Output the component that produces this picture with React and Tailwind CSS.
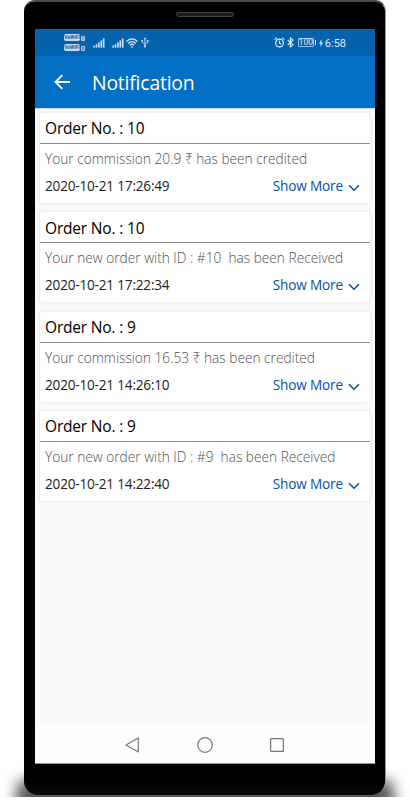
const notifications = [
  { id: 1, order: 10, message: 'Your commission 20.9 ₹ has been credited', date: '2020-10-21 17:26:49' },
  { id: 2, order: 10, message: 'Your new order with ID : #10  has been Received', date: '2020-10-21 17:22:34' },
  { id: 3, order: 9, message: 'Your commission 16.53 ₹ has been credited', date: '2020-10-21 14:26:10' },
  { id: 4, order: 9, message: 'Your new order with ID : #9  has been Received', date: '2020-10-21 14:22:40' },
];

function SignalIcon() {
  return (
    <svg width="12" height="10" viewBox="0 0 12 10" fill="#d3e3f3">
      <rect x="0.3" y="7.6" width="1.6" height="2" />
      <rect x="2.7" y="6.2" width="1.6" height="3.4" />
      <rect x="5.1" y="4.4" width="1.6" height="5.2" />
      <rect x="7.5" y="2.4" width="1.6" height="7.2" />
      <rect x="9.9" y="0.4" width="1.6" height="9.2" />
    </svg>
  );
}

function WifiIcon() {
  return (
    <svg width="12" height="10" viewBox="0 0 12 10" fill="none" stroke="#d3e3f3" strokeWidth="1.4">
      <path d="M0.5 3.4C3.6 0.2 8.4 0.2 11.5 3.4" />
      <path d="M2.2 5.4C4.4 3.2 7.6 3.2 9.8 5.4" />
      <path d="M3.9 7.2C5.1 6 6.9 6 8.1 7.2" />
      <circle cx="6" cy="8.8" r="0.9" fill="#d3e3f3" stroke="none" />
    </svg>
  );
}

function UsbIcon() {
  return (
    <svg width="8" height="11" viewBox="0 0 8 11" fill="none" stroke="#c3d9ee" strokeWidth="1">
      <path d="M4 1V9.5M1.2 3.6V5.4L4 7.2L6.8 5.4V3.6" />
      <path d="M2.6 2.2L4 0.2L5.4 2.2Z" fill="#c3d9ee" stroke="none" />
      <circle cx="4" cy="9.4" r="1.1" fill="#c3d9ee" stroke="none" />
      <rect x="0.4" y="3" width="1.6" height="1.6" fill="#c3d9ee" stroke="none" />
      <rect x="6" y="3" width="1.6" height="1.6" fill="#c3d9ee" stroke="none" />
    </svg>
  );
}

function AlarmIcon() {
  return (
    <svg width="11" height="11" viewBox="0 0 11 11" fill="none" stroke="#dce9f5" strokeWidth="1.2">
      <circle cx="5.5" cy="6" r="3.9" />
      <path d="M5.5 3.8V6.2L7.2 7.2M0.6 2.6L2.8 0.8M10.4 2.6L8.2 0.8" />
    </svg>
  );
}

function BluetoothIcon() {
  return (
    <svg width="7" height="11" viewBox="0 0 7 11" fill="none" stroke="#dce9f5" strokeWidth="1.1">
      <path d="M0.7 3L6 7.8L3.4 10V1L6 3.2L0.7 8" />
    </svg>
  );
}

function VolteBadge({ sim }) {
  return (
    <div className="flex items-end gap-[1px]">
      <span className="flex h-[7px] w-[16px] items-center justify-center rounded-[2px] bg-[#c9dcef] text-[5px] leading-none font-bold text-[#0562ad]">
        VoWiFi
      </span>
      <span className="flex h-[5px] w-[4px] items-center justify-center rounded-[1px] bg-[#a9c8e4] text-[4px] leading-none font-bold text-[#0562ad]">
        {sim}
      </span>
    </div>
  );
}

function StatusBar() {
  return (
    <div className="flex h-[27px] items-center bg-[#0562ad] pr-[29px] pl-[29px] font-[Roboto,sans-serif]">
      <div className="flex flex-col gap-[3px]">
        <VolteBadge sim="1" />
        <VolteBadge sim="2" />
      </div>
      <div className="ml-[8px] flex items-center">
        <SignalIcon />
        <div className="ml-[7px]">
          <SignalIcon />
        </div>
        <div className="ml-[2px]">
          <WifiIcon />
        </div>
        <div className="ml-[3px]">
          <UsbIcon />
        </div>
      </div>
      <div className="ml-auto flex items-center text-[#e3edf7]">
        <AlarmIcon />
        <div className="ml-[2px]">
          <BluetoothIcon />
        </div>
        <span className="ml-[4px] flex h-[9px] w-[16px] items-center justify-center rounded-[1px] border border-[#9dc0e0] text-[8.5px] leading-none">
          100
        </span>
        <span className="ml-px h-[5px] w-px bg-[#dce9f5]" />
        <svg className="ml-[3px]" width="4" height="8" viewBox="0 0 4 8" fill="#e3edf7">
          <path d="M2.6 0L0 4.5H1.7L1.3 8L4 3.4H2.3Z" />
        </svg>
        <span className="mt-px ml-[2px] text-[11px] leading-none">6:58</span>
      </div>
    </div>
  );
}

function NotificationCard({ order, message, date }) {
  return (
    <div className="h-[90px] rounded-[3px] bg-white shadow-[0_0_3px_1px_rgba(0,0,0,0.07)]">
      <div className="flex h-[31px] items-center border-b border-[#8c8c8c] pt-[2px] pl-[5px] text-[15.5px] tracking-[-0.18px] text-black">
        Order No. : {order}
      </div>
      <p className="mt-[5px] pl-[5px] text-[13.7px] leading-[20px] font-light whitespace-pre text-[#505050]">{message}</p>
      <div className="mt-[7px] flex items-center justify-between pr-[10px] pl-[5px] leading-[20px]">
        <span className="text-[13.6px] tracking-[-0.2px] text-[#222]">{date}</span>
        <button className="flex items-center gap-[5px] text-[13.6px] tracking-[-0.15px] text-[#0550ac]">
          Show More
          <svg className="mt-[4px]" width="12" height="8" viewBox="0 0 12 8" fill="none" stroke="#0550ac" strokeWidth="1.6">
            <path d="M1 1.2L6 6.2L11 1.2" />
          </svg>
        </button>
      </div>
    </div>
  );
}

function NavBar() {
  return (
    <div className="flex h-[37px] items-center bg-[#fdfdfd] pl-[90px]">
      <svg width="15" height="16" viewBox="0 0 15 16" fill="none" stroke="#777" strokeWidth="1.2">
        <path d="M13.3 1V15L0.9 8Z" strokeLinejoin="round" />
      </svg>
      <svg className="ml-[57px]" width="16" height="16" viewBox="0 0 16 16" fill="none" stroke="#777" strokeWidth="1.2">
        <circle cx="8" cy="8" r="7.3" />
      </svg>
      <svg className="ml-[57px]" width="14" height="14" viewBox="0 0 14 14" fill="none" stroke="#777" strokeWidth="1.2">
        <rect x="0.6" y="0.6" width="12.8" height="12.8" rx="0.6" />
      </svg>
    </div>
  );
}

export default function App() {
  return (
    <div className="h-[800px] w-[410px] overflow-hidden bg-white pl-[24px] font-['Open_Sans','Noto_Sans',sans-serif]">
      <div className="relative w-[362px]">
        {/* Ground shadow, cut off level with the bottom edge */}
        <div className="absolute -right-[24px] -bottom-[2px] -left-[24px] h-[44px] overflow-hidden">
          <div className="absolute right-[16px] bottom-[-20px] left-[16px] h-[38px] rounded-[12px] bg-black/65 blur-[7px]" />
        </div>
        <div className="relative h-[795px] rounded-t-[11px] rounded-b-[14px] border-t-2 border-r border-[#4a4a4a] border-r-[#999] bg-gradient-to-b from-black from-97% to-[#0b0b0b] px-[11px]">
          <div className="flex h-[27px] justify-center pt-[10px]">
            <div className="h-[5px] w-[58px] rounded-full border border-[#444] bg-[#1c1c1c]" />
          </div>
          <div className="flex h-[735px] w-[340px] flex-col border-b border-[#999] bg-[#fafafa]">
            <StatusBar />
            <header className="flex h-[52px] items-center bg-[#0470c5] pl-[19px] text-white">
              <svg width="17" height="16" viewBox="0 0 17 16" fill="none" stroke="white" strokeWidth="1.8">
                <path d="M16 8H1.8M8.3 1.2L1.5 8L8.3 14.8" />
              </svg>
              <h1 className="mt-[2px] ml-[21px] text-[19.4px] tracking-[-0.2px]">Notification</h1>
            </header>
            <main className="flex flex-1 flex-col gap-[9.3px] border-t border-[#c9d9e8] px-[5px] pt-[4px]">
              {notifications.map((n) => (
                <NotificationCard key={n.id} order={n.order} message={n.message} date={n.date} />
              ))}
            </main>
            <NavBar />
          </div>
        </div>
      </div>
    </div>
  );
}
